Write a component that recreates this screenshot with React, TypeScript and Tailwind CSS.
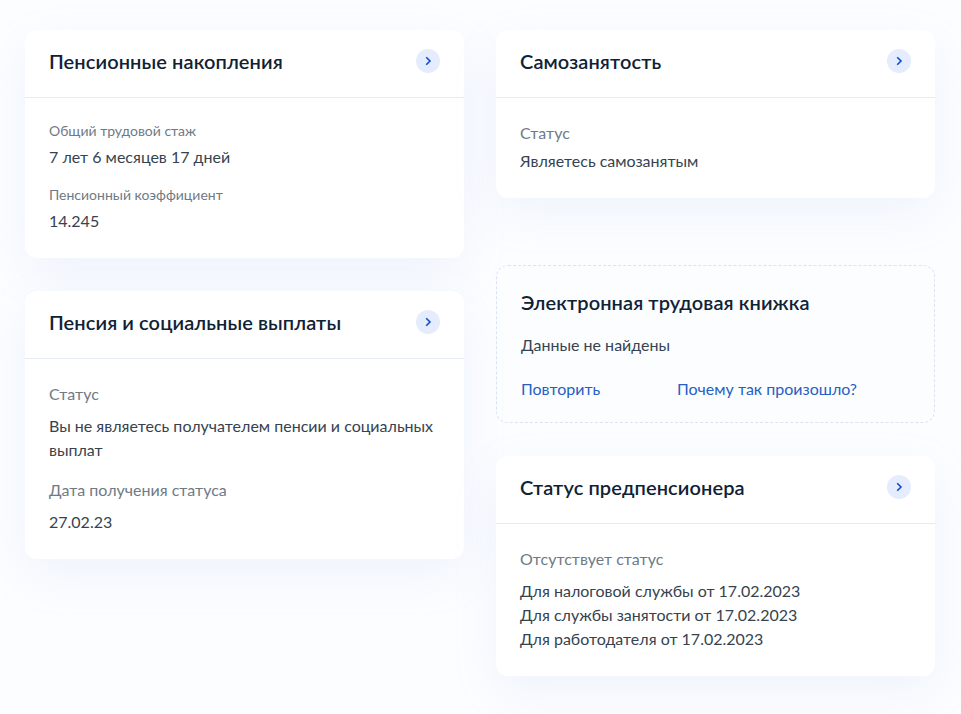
import { ReactNode } from "react";

function ChevronButton() {
  return (
    <div className="flex h-6 w-6 items-center justify-center rounded-full bg-[#e4ecfd]">
      <svg width="12" height="12" viewBox="0 0 12 12" fill="none">
        <path d="M4.2 2.2 8 6 4.2 9.8" stroke="#0d4cd3" strokeWidth="1.6" />
      </svg>
    </div>
  );
}

function Card({ title, className, children }: { title: string; className: string; children: ReactNode }) {
  return (
    <div className={`rounded-xl bg-white shadow-[0_16px_48px_rgba(130,160,225,0.11)] ${className}`}>
      <div className="flex h-[68px] justify-between border-b border-[#e6ebf5] px-[24px] pt-[18px]">
        <div className="text-[20px] leading-[26px] font-semibold tracking-[0.1px] text-[#0f2235]">{title}</div>
        <div className="mt-[1px]">
          <ChevronButton />
        </div>
      </div>
      {children}
    </div>
  );
}

export default function App() {
  return (
    <div className="h-[714px] w-[961px] overflow-hidden bg-[#fcfdff] font-['Lato','Noto_Sans',sans-serif]">
      <div className="flex gap-[32px] pl-[25px] pt-[30px]">
        <div className="flex w-[439px] flex-col gap-[33px]">
          <Card title="Пенсионные накопления" className="h-[228px]">
            <div className="px-[24px] pt-[23px]">
              <div className="text-[14px] leading-[20px] text-[#6f7a85]">Общий трудовой стаж</div>
              <div className="mt-[4px] text-[16px] leading-[24px] text-[#36434f]">7 лет 6 месяцев 17 дней</div>
              <div className="mt-[16px] text-[14px] leading-[20px] text-[#6f7a85]">Пенсионный коэффициент</div>
              <div className="mt-[4px] text-[16px] leading-[24px] text-[#36434f]">14.245</div>
            </div>
          </Card>
          <Card title="Пенсия и социальные выплаты" className="h-[268px]">
            <div className="px-[24px] pt-[23px]">
              <div className="text-[16px] leading-[24px] text-[#6f7a85]">Статус</div>
              <div className="mt-[8px] text-[16px] leading-[24px] text-[#36434f]">
                Вы не являетесь получателем пенсии и социальных выплат
              </div>
              <div className="mt-[16px] text-[16px] leading-[24px] text-[#6f7a85]">Дата получения статуса</div>
              <div className="mt-[8px] text-[16px] leading-[24px] text-[#36434f]">27.02.23</div>
            </div>
          </Card>
        </div>
        <div className="flex w-[439px] flex-col">
          <Card title="Самозанятость" className="h-[168px]">
            <div className="px-[24px] pt-[23px]">
              <div className="text-[16px] leading-[24px] text-[#6f7a85]">Статус</div>
              <div className="mt-[4px] text-[16px] leading-[24px] text-[#36434f]">Являетесь самозанятым</div>
            </div>
          </Card>
          <div className="mt-[67px] h-[158px] rounded-xl border border-dashed border-[#d9e3f2] px-[24px] pt-[23px]">
            <div className="text-[20px] leading-[26px] font-semibold tracking-[0.1px] text-[#0f2235]">Электронная трудовая книжка</div>
            <div className="mt-[18px] text-[16px] leading-[24px] text-[#36434f]">Данные не найдены</div>
            <div className="mt-[20px] flex text-[16px] leading-[24px] text-[#2560c4]">
              <span className="w-[156px]">Повторить</span>
              <span>Почему так произошло?</span>
            </div>
          </div>
          <Card title="Статус предпенсионера" className="mt-[33px] h-[220px]">
            <div className="px-[24px] pt-[23px]">
              <div className="text-[16px] leading-[24px] text-[#6f7a85]">Отсутствует статус</div>
              <div className="mt-[8px] text-[16px] leading-[24px] text-[#36434f]">
                <div>Для налоговой службы от 17.02.2023</div>
                <div>Для службы занятости от 17.02.2023</div>
                <div>Для работодателя от 17.02.2023</div>
              </div>
            </div>
          </Card>
        </div>
      </div>
    </div>
  );
}
